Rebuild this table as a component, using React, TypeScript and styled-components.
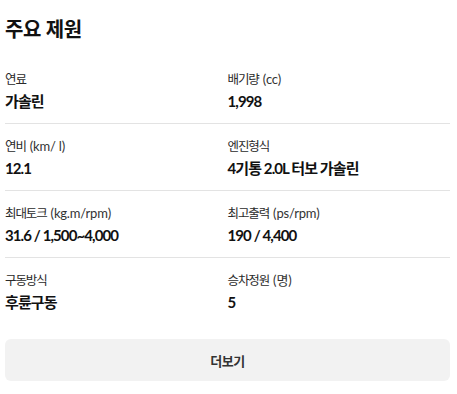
import React from "react";
import styled, { createGlobalStyle } from "styled-components";

const GlobalStyle = createGlobalStyle`
    body {
        margin: 0;
        background: #fff;
        font-family: Lato, "Noto Sans CJK KR", sans-serif;
        color: #111;
    }
`;

const Wrapper = styled.div`
    padding: 15px 7px 0 5px;
    display: flex;
    flex-direction: column;
`;

const Title = styled.h2`
    margin: 0 0 14px;
    font-size: 20px;
    line-height: 28px;
    font-weight: 700;
    letter-spacing: -0.3px;
    color: #111;
`;

const SpecGrid = styled.div`
    display: grid;
    grid-template-columns: 1fr 1fr;
`;

const SpecItem = styled.div<{ $last?: boolean }>`
    display: flex;
    flex-direction: column;
    padding: 13px 0 11px;
    border-bottom: ${props => (props.$last ? "none" : "1px solid #e3e3e3")};
`;

const Label = styled.span`
    font-size: 13px;
    line-height: 19px;
    color: #2a2a2a;
`;

const LabelName = styled.span`
    font-size: 12.5px;
    letter-spacing: -1.1px;
`;

const Unit = styled.span`
    margin-left: 4px;
    letter-spacing: -0.2px;
    color: #333;
`;

const Value = styled.span`
    margin-top: 1px;
    font-size: 15px;
    line-height: 22px;
    font-weight: 700;
    letter-spacing: -0.9px;
    color: #111;
`;

const MoreButton = styled.button`
    margin-top: 15px;
    height: 42px;
    border: none;
    border-radius: 6px;
    background: #f2f2f2;
    font-family: inherit;
    font-size: 13px;
    font-weight: 700;
    letter-spacing: -0.5px;
    color: #333;
    cursor: pointer;
`;

const specs = [
    { label: "연료", value: "가솔린" },
    { label: "배기량", unit: "(cc)", value: "1,998" },
    { label: "연비", unit: "(km/ l)", value: "12.1" },
    { label: "엔진형식", value: "4기통 2.0L 터보 가솔린" },
    { label: "최대토크", unit: "(kg.m/rpm)", value: "31.6 / 1,500~4,000" },
    { label: "최고출력", unit: "(ps/rpm)", value: "190 / 4,400" },
    { label: "구동방식", value: "후륜구동" },
    { label: "승차정원", unit: "(명)", value: "5" },
];

export default function App() {
    return (
        <>
            <GlobalStyle />
            <Wrapper>
                <Title>주요 제원</Title>
                <SpecGrid>
                    {specs.map((spec, index) => (
                        <SpecItem key={spec.label} $last={index >= specs.length - 2}>
                            <Label>
                                <LabelName>{spec.label}</LabelName>
                                {spec.unit ? <Unit>{spec.unit}</Unit> : null}
                            </Label>
                            <Value>{spec.value}</Value>
                        </SpecItem>
                    ))}
                </SpecGrid>
                <MoreButton>더보기</MoreButton>
            </Wrapper>
        </>
    );
}
